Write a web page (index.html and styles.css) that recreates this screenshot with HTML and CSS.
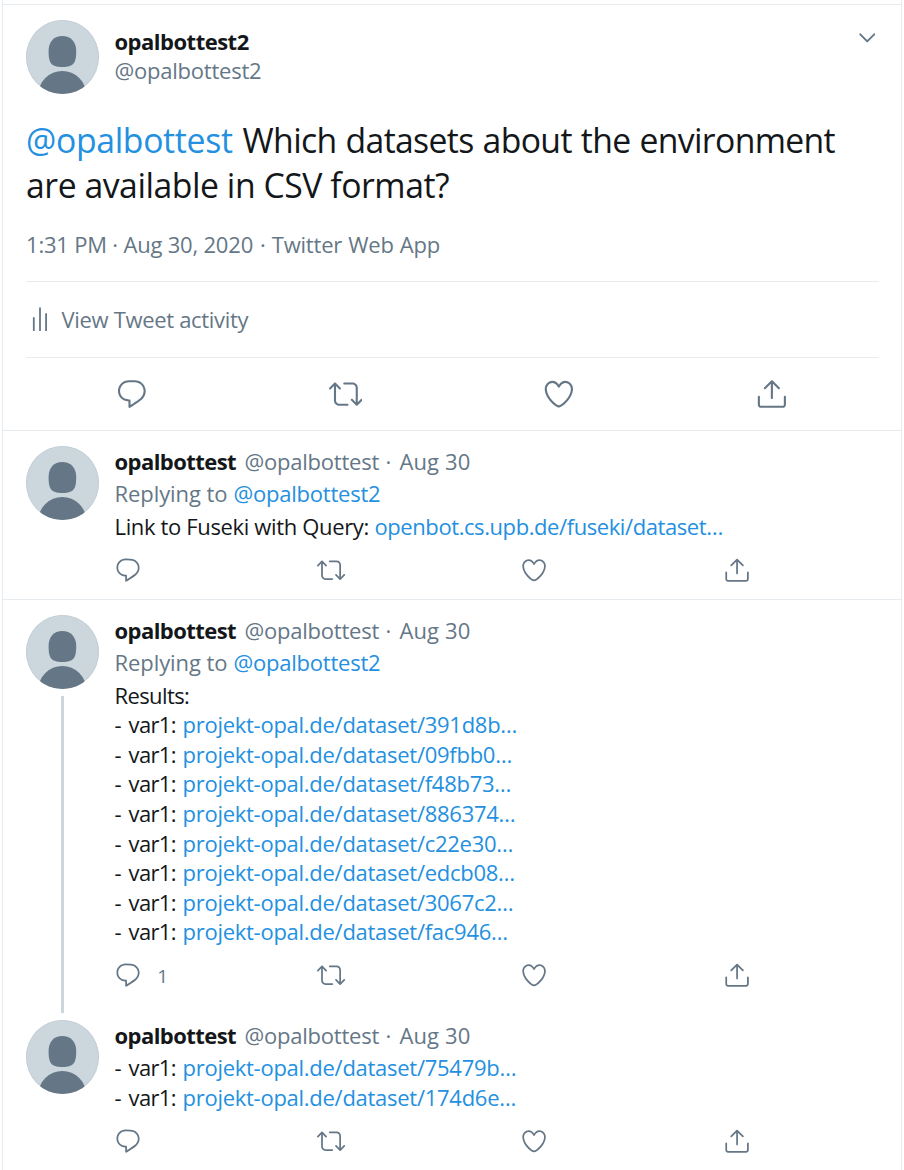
FILE: index.html
```html
<!DOCTYPE html>
<html lang="en">
<head>
<meta charset="utf-8">
<title>Tweet thread</title>
<link rel="stylesheet" href="styles.css">
</head>
<body>
<svg class="sprite" aria-hidden="true">
  <symbol id="avatar" viewBox="0 0 73 74">
    <clipPath id="disc"><ellipse cx="36.5" cy="37" rx="36.5" ry="37"/></clipPath>
    <g clip-path="url(#disc)">
      <rect width="73" height="74" fill="#ccd6dd"/>
      <ellipse cx="36.5" cy="37" rx="36.2" ry="36.7" fill="none" stroke="#c2cdd5"/>
      <path d="M36.3 16C44.6 16 50.2 22 50.2 30.5C50.2 42.5 48.2 47 36.3 47C24.4 47 22.6 42.5 22.6 30.5C22.6 22 28 16 36.3 16Z" fill="#657786"/>
      <circle cx="36.3" cy="75" r="24" fill="#657786"/>
    </g>
  </symbol>
  <symbol id="reply" viewBox="0 0 24 24"><path d="M14.046 2.242l-4.148-.01h-.002c-4.374 0-7.8 3.427-7.8 7.802 0 4.098 3.186 7.206 7.465 7.37v3.828c0 .108.044.286.12.403.142.225.384.347.632.347.138 0 .277-.038.402-.118.264-.168 6.473-4.14 8.088-5.506 1.902-1.61 3.04-3.97 3.043-6.312v-.017c-.006-4.367-3.43-7.787-7.8-7.788zm3.787 12.972c-1.134.96-4.862 3.405-6.772 4.643V16.67c0-.414-.335-.75-.75-.75h-.396c-3.66 0-6.318-2.476-6.318-5.886 0-3.534 2.768-6.302 6.3-6.302l4.147.01h.002c3.532 0 6.3 2.766 6.302 6.296-.003 1.91-.942 3.844-2.514 5.176z"/></symbol>
  <symbol id="retweet" viewBox="0 0 24 24"><path d="M23.77 15.67c-.292-.293-.767-.293-1.06 0l-2.22 2.22V7.65c0-2.068-1.683-3.75-3.75-3.75h-5.85c-.414 0-.75.336-.75.75s.336.75.75.75h5.85c1.24 0 2.25 1.01 2.25 2.25v10.24l-2.22-2.22c-.293-.293-.768-.293-1.06 0s-.294.768 0 1.06l3.5 3.5c.145.147.337.22.53.22s.383-.072.53-.22l3.5-3.5c.294-.292.294-.767 0-1.06zm-10.66 3.28H7.26c-1.24 0-2.25-1.01-2.25-2.25V6.46l2.22 2.22c.148.147.34.22.532.22s.384-.073.53-.22c.293-.293.293-.768 0-1.06l-3.5-3.5c-.293-.294-.768-.294-1.06 0l-3.5 3.5c-.294.292-.294.767 0 1.06s.767.293 1.06 0l2.22-2.22V16.7c0 2.068 1.683 3.75 3.75 3.75h5.85c.414 0 .75-.336.75-.75s-.337-.75-.75-.75z"/></symbol>
  <symbol id="heart" viewBox="0 0 24 24"><path d="M12 21.638h-.014C9.403 21.59 1.95 14.856 1.95 8.478c0-3.064 2.525-5.754 5.403-5.754 2.29 0 3.83 1.58 4.646 2.73.814-1.148 2.354-2.73 4.645-2.73 2.88 0 5.404 2.69 5.404 5.755 0 6.376-7.454 13.11-10.037 13.157H12zM7.354 4.225c-2.08 0-3.903 1.988-3.903 4.255 0 5.74 7.034 11.596 8.55 11.658 1.518-.062 8.55-5.917 8.55-11.658 0-2.267-1.823-4.255-3.903-4.255-2.528 0-3.94 2.936-3.952 2.965-.23.562-1.156.562-1.387 0-.014-.03-1.425-2.965-3.954-2.965z"/></symbol>
  <symbol id="share" viewBox="0 0 24 24"><path d="M17.53 7.47l-5-5c-.293-.293-.768-.293-1.06 0l-5 5c-.294.293-.294.768 0 1.06s.767.294 1.06 0l3.72-3.72V15c0 .414.336.75.75.75s.75-.336.75-.75V4.81l3.72 3.72c.146.147.338.22.53.22s.384-.072.53-.22c.293-.293.293-.767 0-1.06z"/><path d="M19.708 21.944H4.292C3.028 21.944 2 20.916 2 19.652V14c0-.414.336-.75.75-.75s.75.336.75.75v5.652c0 .437.355.792.792.792h15.416c.437 0 .792-.355.792-.792V14c0-.414.336-.75.75-.75s.75.336.75.75v5.652c0 1.264-1.028 2.292-2.292 2.292z"/></symbol>
  <symbol id="caret" viewBox="0 0 24 24"><path d="M20.207 8.147c-.39-.39-1.023-.39-1.414 0L12 14.94 5.207 8.147c-.39-.39-1.023-.39-1.414 0-.39.39-.39 1.023 0 1.414l7.5 7.5c.195.196.45.294.707.294s.512-.098.707-.293l7.5-7.5c.39-.39.39-1.022 0-1.413z"/></symbol>
  <symbol id="bars" viewBox="0 0 16 24"><path d="M1.8 11v12.4M8 1.2v22.2M14.1 7v16.4" fill="none" stroke="currentColor" stroke-width="1.8" stroke-linecap="round"/></symbol>
</svg>

<main class="timeline">
  <article class="focus">
    <header class="focus-head">
      <svg class="avatar"><use href="#avatar"/></svg>
      <div class="who">
        <div class="name">opalbottest2</div>
        <div class="handle">@opalbottest2</div>
      </div>
      <svg class="caret"><use href="#caret"/></svg>
    </header>
    <p class="headline"><a class="mention">@opalbottest</a> <span class="h1">Which datasets about the environment</span><br><span class="h2">are available in CSV format?</span></p>
    <div class="meta">1:31 PM · Aug 30, 2020 <span class="source">· Twitter Web App</span></div>
    <div class="activity"><svg class="bars"><use href="#bars"/></svg><span>View Tweet activity</span></div>
    <div class="actions large">
      <svg><use href="#reply"/></svg>
      <svg><use href="#retweet"/></svg>
      <svg><use href="#heart"/></svg>
      <svg><use href="#share"/></svg>
    </div>
  </article>

  <article class="tweet">
    <div class="side"><svg class="avatar"><use href="#avatar"/></svg></div>
    <div class="content">
      <header class="head"><span class="name">opalbottest</span><span class="handle">@opalbottest</span><span class="dot">·</span><span class="date">Aug 30</span><svg class="caret"><use href="#caret"/></svg></header>
      <div class="replying"><span>Replying to</span><a>@opalbottest2</a></div>
      <div class="body"><div class="row"><span class="lead">Link to Fuseki with Query:</span><a class="long">openbot.cs.upb.de/fuseki/dataset…</a></div></div>
      <div class="actions">
        <div><svg><use href="#reply"/></svg></div>
        <div><svg><use href="#retweet"/></svg></div>
        <div><svg><use href="#heart"/></svg></div>
        <div><svg><use href="#share"/></svg></div>
      </div>
    </div>
  </article>

  <article class="tweet threaded">
    <div class="side"><svg class="avatar"><use href="#avatar"/></svg><div class="thread-line"></div></div>
    <div class="content">
      <header class="head"><span class="name">opalbottest</span><span class="handle">@opalbottest</span><span class="dot">·</span><span class="date">Aug 30</span><svg class="caret"><use href="#caret"/></svg></header>
      <div class="replying"><span>Replying to</span><a>@opalbottest2</a></div>
      <div class="body">
        <div class="row"><span class="results">Results:</span></div>
        <div class="row"><span class="var">- var1:</span><a>projekt-opal.de/dataset/391d8b…</a></div>
        <div class="row"><span class="var">- var1:</span><a>projekt-opal.de/dataset/09fbb0…</a></div>
        <div class="row"><span class="var">- var1:</span><a>projekt-opal.de/dataset/f48b73…</a></div>
        <div class="row"><span class="var">- var1:</span><a>projekt-opal.de/dataset/886374…</a></div>
        <div class="row"><span class="var">- var1:</span><a>projekt-opal.de/dataset/c22e30…</a></div>
        <div class="row"><span class="var">- var1:</span><a>projekt-opal.de/dataset/edcb08…</a></div>
        <div class="row"><span class="var">- var1:</span><a>projekt-opal.de/dataset/3067c2…</a></div>
        <div class="row"><span class="var">- var1:</span><a>projekt-opal.de/dataset/fac946…</a></div>
      </div>
      <div class="actions">
        <div><svg><use href="#reply"/></svg><span class="count">1</span></div>
        <div><svg><use href="#retweet"/></svg></div>
        <div><svg><use href="#heart"/></svg></div>
        <div><svg><use href="#share"/></svg></div>
      </div>
    </div>
  </article>

  <article class="tweet">
    <div class="side"><svg class="avatar"><use href="#avatar"/></svg></div>
    <div class="content">
      <header class="head"><span class="name">opalbottest</span><span class="handle">@opalbottest</span><span class="dot">·</span><span class="date">Aug 30</span><svg class="caret"><use href="#caret"/></svg></header>
      <div class="body">
        <div class="row"><span class="var">- var1:</span><a>projekt-opal.de/dataset/75479b…</a></div>
        <div class="row"><span class="var">- var1:</span><a>projekt-opal.de/dataset/174d6e…</a></div>
      </div>
      <div class="actions">
        <div><svg><use href="#reply"/></svg></div>
        <div><svg><use href="#retweet"/></svg></div>
        <div><svg><use href="#heart"/></svg></div>
        <div><svg><use href="#share"/></svg></div>
      </div>
    </div>
  </article>
</main>
</body>
</html>
```
FILE: styles.css
```css
* { box-sizing: border-box; }

html, body { height: 100%; }

body {
  margin: 0;
  overflow: hidden;
  background: #fff;
  color: #14171a;
  font: 22px/29.53px "Open Sans", "Noto Sans", sans-serif;
  letter-spacing: -0.27px;
}

svg { display: block; flex: none; fill: currentColor; }
a { color: #2490e0; text-decoration: none; }

.sprite { position: absolute; width: 0; height: 0; }

.timeline {
  width: 900px;
  height: 1170px;
  margin-left: 2px;
  padding-top: 4px;
  overflow: hidden;
  border: solid #e6ecf0;
  border-width: 0 1px;
}

.avatar { width: 73px; height: 74px; }
.caret { width: 22.5px; height: 22.5px; color: #657786; }
.name { font-weight: 700; letter-spacing: -0.55px; }
.handle { color: #657786; letter-spacing: -0.22px; }

/* Focused tweet */
.focus {
  height: 427px;
  padding: 15px 22px 0 23px;
  border: solid #e6ecf0;
  border-width: 1px 0;
}

.focus-head { display: flex; }
.who { flex: 1; padding: 7px 0 0 15.5px; line-height: 29px; }
.who .name { letter-spacing: -0.5px; }
.focus-head .caret { margin: 5.5px 1px 0 0; }

.headline {
  margin: 24px 0 0;
  font-size: 33.75px;
  line-height: 45px;
  white-space: nowrap;
}
.mention { padding-right: 1.5px; letter-spacing: -0.33px; }
.h1 { letter-spacing: -0.66px; word-spacing: 0.9px; }
.h2 { letter-spacing: -0.46px; }

.meta { margin-top: 22px; color: #657786; letter-spacing: -0.2px; }
.source { padding-left: 1.5px; word-spacing: 0.6px; }

.activity {
  display: flex;
  align-items: center;
  height: 77px;
  margin-top: 21px;
  border: solid #e6ecf0;
  border-width: 1px 0;
  color: #657786;
  letter-spacing: -0.32px;
}
.activity span { padding-top: 2px; }
.bars { width: 16px; height: 24px; margin: 0 13.5px 0 6px; }

/* Replies */
.tweet {
  display: flex;
  padding: 15px 22px 15px 23px;
  border-bottom: 1px solid #e6ecf0;
}
.side {
  display: flex;
  flex-direction: column;
  align-items: center;
  width: 73px;
  margin-right: 15px;
}
.content { flex: 1; padding: 0.8px 0 0 0.5px; }
.threaded { padding-bottom: 0; border-bottom: 0; }
.threaded .content { padding-bottom: 15.77px; }
.thread-line { flex: 1; width: 3px; margin: 7px 0 -8px; background: #ccd6dd; }

.head { display: flex; }
.head .name { width: 130px; }
.head .handle { width: 141px; }
.head .dot { width: 14px; color: #657786; }
.head .date { flex: 1; letter-spacing: 0.1px; color: #657786; }
.head .caret { margin: 3.5px 1px 0 0; }

.replying { display: flex; margin-top: 3px; color: #657786; }
.replying span { width: 119px; letter-spacing: -0.08px; }
.replying a { letter-spacing: -0.23px; }

.body { margin-top: 3px; }
.row { display: flex; }
.replying, .row { white-space: nowrap; }
.var { width: 68px; letter-spacing: -0.65px; word-spacing: 2.6px; }
.lead { width: 260px; letter-spacing: -0.35px; }
.long { letter-spacing: -0.42px; }
.results { letter-spacing: -0.6px; }

/* Action bars */
.actions {
  display: grid;
  grid-template-columns: repeat(4, 203px);
  height: 28px;
  margin: 14.6px 0 0 -0.5px;
  color: #657786;
}
.actions svg { width: 28.125px; height: 28.125px; }
.actions div { display: flex; }
.count { margin-left: 15px; font-size: 19px; line-height: 31px; }

.actions.large {
  grid-template-columns: repeat(4, 213.25px);
  justify-items: center;
  margin: 19px 0 0 -0.5px;
  height: 34px;
}
.actions.large svg { width: 33.75px; height: 33.75px; }
```
